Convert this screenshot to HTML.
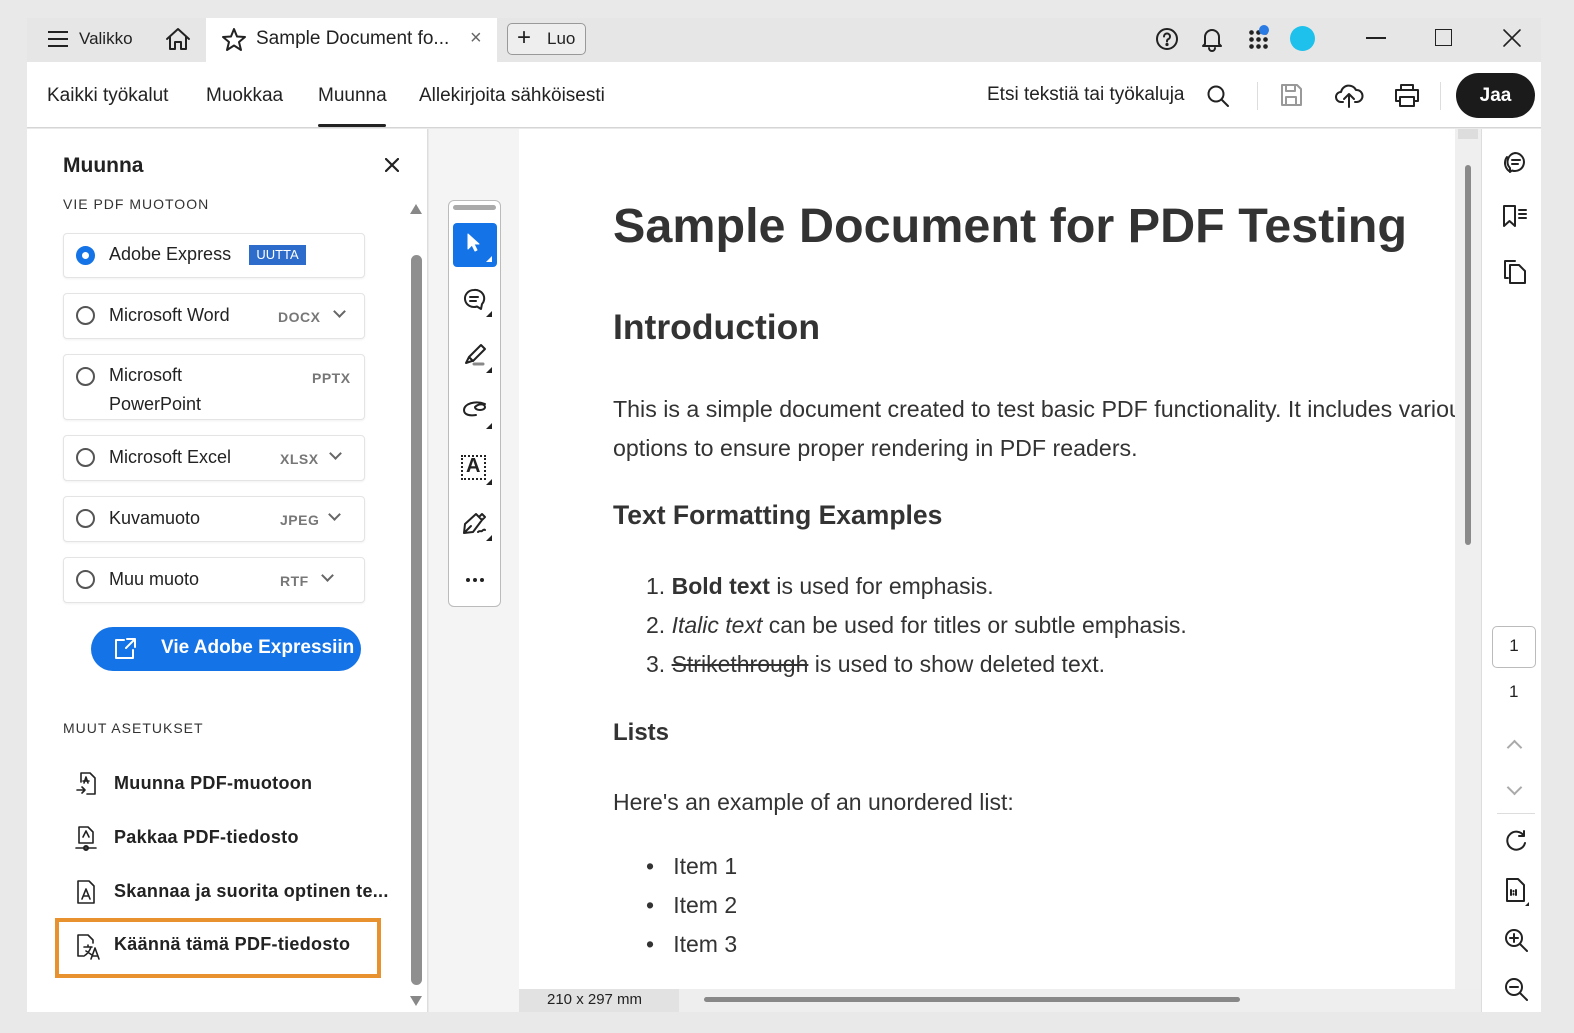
<!DOCTYPE html>
<html><head><meta charset="utf-8">
<style>
*{box-sizing:border-box;margin:0;padding:0}
body{width:1574px;height:1033px;background:#e9e9e9;font-family:"Liberation Sans",Arial,sans-serif;position:relative;overflow:hidden;color:#222}
.a{position:absolute}
.ui{font-family:"Liberation Sans",Arial,sans-serif}
svg{position:absolute;fill:none;stroke:#222;stroke-width:2;stroke-linecap:round;stroke-linejoin:round}
.card{position:absolute;left:63px;width:302px;background:#fff;border:1px solid #e4e4e4;border-radius:4px;box-shadow:0 1px 2px rgba(0,0,0,.06)}
.radio{position:absolute;left:12px;width:19px;height:19px;border:2.5px solid #555;border-radius:50%}
.ct{position:absolute;left:45px;font-size:18px;color:#222}
.fmt{position:absolute;font-size:14px;color:#777;font-weight:bold;letter-spacing:.5px}
.chev{position:absolute;width:9px;height:9px;border-right:2px solid #666;border-bottom:2px solid #666;transform:rotate(45deg)}
.doc{color:#333}
.li{position:absolute;font-size:23px;color:#333}
.mi{position:absolute;left:114px;font-size:18px;font-weight:bold;color:#222;letter-spacing:.3px}
.tri{position:absolute;width:0;height:0;border-left:6px solid transparent;border-bottom:6px solid #222}
</style></head><body>
<!-- title bar -->
<div class="a" style="left:27px;top:18px;width:1514px;height:44px;background:#e6e6e6"></div>
<div class="a" style="left:48px;top:31px;width:20px;height:2px;background:#222;box-shadow:0 7px 0 #222,0 14px 0 #222"></div>
<div class="a" style="left:79px;top:29px;font-size:17px">Valikko</div>
<svg style="left:164px;top:26px" width="28" height="26" viewBox="0 0 28 26"><path d="M3 13 L14 3 L25 13 M6 11 V23 H11 V16 H17 V23 H22 V11"/></svg>
<div class="a" style="left:206px;top:18px;width:291px;height:44px;background:#fff"></div>
<svg style="left:221px;top:27px" width="26" height="25" viewBox="0 0 26 25"><path d="M13 2 L16 9.5 L24 10 L18 15 L20 23 L13 18.5 L6 23 L8 15 L2 10 L10 9.5 Z"/></svg>
<div class="a" style="left:256px;top:28px;font-size:19px">Sample Document fo...</div>
<div class="a" style="left:470px;top:27px;font-size:20px;color:#666">×</div>
<div class="a" style="left:507px;top:23px;width:79px;height:32px;border:1.5px solid #999;border-radius:5px;background:#eee"></div>
<div class="a" style="left:517px;top:24px;font-size:24px">+</div>
<div class="a" style="left:547px;top:29px;font-size:17px">Luo</div>
<svg style="left:1155px;top:27px" width="24" height="24" viewBox="0 0 24 24"><circle cx="12" cy="12" r="10"/><path d="M9 9.5a3 3 0 1 1 4 2.8c-1 .5-1 1-1 2.2"/><circle cx="12" cy="17.5" r=".6" fill="#222"/></svg>
<svg style="left:1200px;top:26px" width="24" height="26" viewBox="0 0 24 26"><path d="M5 18 V11 a7 7 0 0 1 14 0 V18 L21 20 H3 Z M9 22 a3 3 0 0 0 6 0"/></svg>
<div class="a" style="left:1248px;top:29px;width:20px;height:20px;background:radial-gradient(circle,#222 2px,transparent 2.6px) 0 0/7px 7px"></div>
<div class="a" style="left:1259px;top:25px;width:10px;height:10px;border-radius:50%;background:#2b7be4"></div>
<div class="a" style="left:1290px;top:26px;width:25px;height:25px;border-radius:50%;background:#1ec1ec"></div>
<div class="a" style="left:1366px;top:37px;width:20px;height:2px;background:#222"></div>
<div class="a" style="left:1435px;top:29px;width:17px;height:17px;border:1.5px solid #222"></div>
<svg style="left:1502px;top:28px" width="20" height="20" viewBox="0 0 20 20"><path d="M2 2 L18 18 M18 2 L2 18" stroke-width="1.6"/></svg>

<!-- toolbar -->
<div class="a" style="left:27px;top:62px;width:1514px;height:66px;background:#fff;border-bottom:1px solid #d5d5d5"></div>
<div class="a" style="left:47px;top:85px;font-size:19px">Kaikki työkalut</div>
<div class="a" style="left:206px;top:85px;font-size:19px">Muokkaa</div>
<div class="a" style="left:318px;top:85px;font-size:19px">Muunna</div>
<div class="a" style="left:318px;top:124px;width:68px;height:3px;background:#222;border-radius:2px"></div>
<div class="a" style="left:419px;top:85px;font-size:19px">Allekirjoita sähköisesti</div>
<div class="a" style="left:987px;top:84px;font-size:19px">Etsi tekstiä tai työkaluja</div>
<svg style="left:1206px;top:84px" width="24" height="24" viewBox="0 0 24 24"><circle cx="10" cy="10" r="7.5"/><path d="M15.5 15.5 L22 22"/></svg>
<div class="a" style="left:1257px;top:82px;width:1px;height:28px;background:#ddd"></div>
<svg style="left:1279px;top:82px" width="24" height="26" viewBox="0 0 24 26"><path stroke="#999" d="M3 3 H18 L22 7 V23 H3 Z M7 3 V9 H16 V3 M7 23 V15 H17 V23"/></svg>
<svg style="left:1334px;top:80px" width="30" height="30" viewBox="0 0 30 30"><path d="M9 22 H7 a5 5 0 0 1 0-10 a8 8 0 0 1 15-2 a5.5 5.5 0 0 1 1 12 H21 M15 27 V14 M10 19 L15 14 L20 19"/></svg>
<svg style="left:1393px;top:82px" width="28" height="26" viewBox="0 0 28 26"><path d="M8 8 V3 H20 V8 M3 8 H25 V19 H21 M7 19 H3 V8 M7 15 H21 V24 H7 Z"/></svg>
<div class="a" style="left:1440px;top:82px;width:1px;height:28px;background:#ddd"></div>
<div class="a" style="left:1456px;top:73px;width:79px;height:45px;border-radius:23px;background:#1b1b1b;color:#fff;font-weight:bold;font-size:19px;text-align:center;line-height:45px">Jaa</div>

<!-- left panel -->
<div class="a" style="left:27px;top:129px;width:401px;height:883px;background:#fff;border-right:1px solid #ddd"></div>
<div class="a ui" style="left:63px;top:154px;font-size:21px;font-weight:bold">Muunna</div>
<svg style="left:385px;top:158px" width="14" height="14" viewBox="0 0 14 14"><path d="M1 1 L13 13 M13 1 L1 13" stroke-width="2.2"/></svg>
<div class="a ui" style="left:63px;top:196px;font-size:14px;letter-spacing:1px;color:#333">VIE PDF MUOTOON</div>

<div class="card ui" style="top:233px;height:45px"><div class="radio" style="top:12px;border:6px solid #1473e6"></div><div class="ct" style="top:10px">Adobe Express</div><div class="a" style="left:185px;top:11px;width:57px;height:20px;background:#2d6ccb;color:#fff;font-size:13px;text-align:center;line-height:20px">UUTTA</div></div>
<div class="card ui" style="top:293px;height:46px"><div class="radio" style="top:12px"></div><div class="ct" style="top:11px">Microsoft Word</div><div class="fmt" style="left:214px;top:15px">DOCX</div><div class="chev" style="left:271px;top:13px"></div></div>
<div class="card ui" style="top:354px;height:66px"><div class="radio" style="top:12px"></div><div class="ct" style="line-height:29px;top:6px">Microsoft<br>PowerPoint</div><div class="fmt" style="left:248px;top:15px">PPTX</div></div>
<div class="card ui" style="top:435px;height:46px"><div class="radio" style="top:12px"></div><div class="ct" style="top:11px">Microsoft Excel</div><div class="fmt" style="left:216px;top:15px">XLSX</div><div class="chev" style="left:267px;top:13px"></div></div>
<div class="card ui" style="top:496px;height:46px"><div class="radio" style="top:12px"></div><div class="ct" style="top:11px">Kuvamuoto</div><div class="fmt" style="left:216px;top:15px">JPEG</div><div class="chev" style="left:266px;top:13px"></div></div>
<div class="card ui" style="top:557px;height:46px"><div class="radio" style="top:12px"></div><div class="ct" style="top:11px">Muu muoto</div><div class="fmt" style="left:216px;top:15px">RTF</div><div class="chev" style="left:259px;top:13px"></div></div>

<div class="a" style="left:91px;top:627px;width:270px;height:44px;border-radius:22px;background:#1473e6"></div>
<svg style="left:113px;top:636px" width="26" height="25" viewBox="0 0 26 25"><path stroke="#fff" d="M11 4 H3 V22 H20 V14 M14 3 H22 V11 M22 3 L13 12"/></svg>
<div class="a ui" style="left:161px;top:637px;font-size:19px;font-weight:bold;color:#fff">Vie Adobe Expressiin</div>

<div class="a ui" style="left:63px;top:720px;font-size:14px;letter-spacing:1px;color:#333">MUUT ASETUKSET</div>
<svg style="left:73px;top:770px" width="26" height="28" viewBox="0 0 26 28"><path stroke-width="1.6" d="M8 12 V3 H17 L22 8 V24 H14 M4 20 H12 M9 17 L12 20 L9 23 M11 13 L13 7 L15 13 M10 11 H16"/></svg>
<div class="mi ui" style="top:773px">Muunna PDF-muotoon</div>
<svg style="left:73px;top:824px" width="26" height="28" viewBox="0 0 26 28"><path stroke-width="1.6" d="M6 19 V3 H15 L20 8 V19 Z M3 24 H23 M10 13 L13 7 L16 13"/><circle cx="13" cy="24" r="2"/></svg>
<div class="mi ui" style="top:827px">Pakkaa PDF-tiedosto</div>
<svg style="left:73px;top:878px" width="26" height="28" viewBox="0 0 26 28"><path stroke-width="1.6" d="M5 3 H16 L21 8 V25 H5 Z M9 21 L13 11 L17 21 M10.5 18 H15.5"/></svg>
<div class="mi ui" style="top:881px">Skannaa ja suorita optinen te...</div>
<div class="a" style="left:55px;top:918px;width:326px;height:60px;border:4px solid #e8912f"></div>
<svg style="left:73px;top:931px" width="30" height="30" viewBox="0 0 30 30"><path stroke-width="1.6" d="M10 25 H5 V4 H15 L20 9 V12 M11 16 H19 M15 14 V16 M18 16 Q16 22 11 25 M13 20 L19 24 M18 28 L22 17 L26 28 M19.5 25 H24.5"/></svg>
<div class="mi ui" style="top:934px">Käännä tämä PDF-tiedosto</div>
<!-- panel scrollbar -->
<div class="tri" style="left:410px;top:204px;border-left:6px solid transparent;border-right:6px solid transparent;border-bottom:10px solid #888"></div>
<div class="a" style="left:411px;top:255px;width:11px;height:730px;border-radius:6px;background:#8f8f8f"></div>
<div class="a" style="left:410px;top:996px;width:0;height:0;border-left:6px solid transparent;border-right:6px solid transparent;border-top:10px solid #888"></div>

<!-- middle gray -->
<div class="a" style="left:429px;top:129px;width:90px;height:883px;background:#f4f4f4"></div>
<div class="a" style="left:448px;top:200px;width:53px;height:407px;background:#fff;border:1.5px solid #bbb;border-radius:6px"></div>
<div class="a" style="left:453px;top:205px;width:43px;height:5px;background:#aaa;border-radius:3px"></div>
<div class="a" style="left:453px;top:223px;width:44px;height:44px;background:#1473e6;border-radius:4px"></div>
<svg style="left:465px;top:232px" width="18" height="22" viewBox="0 0 18 22"><path fill="#fff" stroke="#fff" stroke-width="1" d="M3 2 V17 L7 13 L10 19 L12 18 L9 12 L14 12 Z"/></svg>
<div class="tri" style="left:486px;top:256px;border-bottom-color:#fff"></div>
<svg style="left:461px;top:287px" width="28" height="26" viewBox="0 0 28 26"><path d="M13 3 a9 8.5 0 1 0 3 16.5 L20 22 L21 17 A9 8.5 0 0 0 13 3 Z M9 10 H17 M9 14 H15"/></svg><div class="tri" style="left:486px;top:311px"></div>
<svg style="left:461px;top:342px" width="28" height="26" viewBox="0 0 28 26"><path d="M20 3 L24 7 L12 19 L8 15 Z M8 15 L5 21 L11 19"/><path stroke="#888" stroke-width="3" d="M13 22 H22"/></svg><div class="tri" style="left:486px;top:367px"></div>
<svg style="left:461px;top:398px" width="28" height="26" viewBox="0 0 28 26"><path d="M14 9 c4 -4 10 -3 10 0 c0 4 -10 4 -10 0 M24 6 C14 2 3 6 3 12 c0 5 6 6 12 5"/></svg><div class="tri" style="left:486px;top:423px"></div>
<div class="a" style="left:461px;top:455px;width:25px;height:25px;border:2px dotted #222"></div>
<div class="a" style="left:466px;top:455px;font-size:20px;font-weight:bold;">A</div><div class="tri" style="left:486px;top:479px"></div>
<svg style="left:460px;top:510px" width="30" height="28" viewBox="0 0 30 28"><path d="M16 4 L22 10 L13 22 L4 23 L5 14 Z M19 7 L22 4 L25 7 L22 10 M4 23 L11 16 M18 22 c2-2 3 0 4-1 s2-2 3-1"/></svg><div class="tri" style="left:486px;top:535px"></div>
<div class="a" style="left:466px;top:578px;width:4px;height:4px;border-radius:50%;background:#222;box-shadow:7px 0 #222,14px 0 #222"></div>

<!-- document -->
<div class="a" style="left:519px;top:129px;width:936px;height:860px;background:#fff"></div>
<div class="a doc" style="left:613px;top:198px;font-size:48.5px;font-weight:bold;white-space:nowrap">Sample Document for PDF Testing</div>
<div class="a doc" style="left:613px;top:307px;font-size:35.5px;font-weight:bold">Introduction</div>
<div class="a doc" style="left:613px;top:390px;width:842px;overflow:hidden;font-size:23.2px;line-height:39px;white-space:nowrap">This is a simple document created to test basic PDF functionality. It includes various<br>options to ensure proper rendering in PDF readers.</div>
<div class="a doc" style="left:613px;top:500px;font-size:26.5px;font-weight:bold">Text Formatting Examples</div>
<div class="li" style="left:646px;top:573px">1. <b>Bold text</b> is used for emphasis.</div>
<div class="li" style="left:646px;top:612px">2. <i>Italic text</i> can be used for titles or subtle emphasis.</div>
<div class="li" style="left:646px;top:651px">3. <s>Strikethrough</s> is used to show deleted text.</div>
<div class="a doc" style="left:613px;top:719px;font-size:24px;font-weight:bold">Lists</div>
<div class="li" style="left:613px;top:789px">Here's an example of an unordered list:</div>
<div class="li" style="left:646px;top:853px">•&nbsp;&nbsp; Item 1</div>
<div class="li" style="left:646px;top:892px">•&nbsp;&nbsp; Item 2</div>
<div class="li" style="left:646px;top:931px">•&nbsp;&nbsp; Item 3</div>
<!-- bottom status -->
<div class="a" style="left:519px;top:989px;width:962px;height:23px;background:#eee"></div>
<div class="a" style="left:519px;top:989px;width:160px;height:23px;background:#e2e2e2;font-size:15px;line-height:22px;padding-left:28px;color:#222">210 x 297 mm</div>
<div class="a" style="left:704px;top:997px;width:536px;height:5px;border-radius:3px;background:#888"></div>
<!-- doc scrollbar -->
<div class="a" style="left:1455px;top:129px;width:26px;height:860px;background:#efefef"></div>
<div class="a" style="left:1458px;top:129px;width:20px;height:10px;background:#ddd"></div>
<div class="a" style="left:1465px;top:165px;width:6px;height:380px;border-radius:3px;background:#8a8a8a"></div>

<!-- right rail -->
<div class="a" style="left:1481px;top:129px;width:60px;height:883px;background:#fff;border-left:1px solid #ddd"></div>
<svg style="left:1501px;top:150px" width="28" height="26" viewBox="0 0 28 26"><path d="M14 3 a9 9 0 1 1 -3 17.5 L9 22 L9 18 A9 9 0 0 1 14 3 Z M11 10 H19 M11 14 H17 M6 7 a10 10 0 0 0 2 14"/></svg>
<svg style="left:1501px;top:202px" width="28" height="28" viewBox="0 0 28 28"><path d="M3 4 H14 V24 L8.5 19 L3 24 Z M18 8 H25 M18 12 H25 M18 16 H25" stroke-width="2"/></svg>
<svg style="left:1501px;top:257px" width="28" height="28" viewBox="0 0 28 28"><path d="M7 21 H4 V4 H14 M9 8 H18 L24 14 V26 H9 Z"/></svg>
<div class="a" style="left:1492px;top:626px;width:44px;height:42px;border:1.5px solid #bbb;border-radius:5px;text-align:center;line-height:38px;font-size:17px">1</div>
<div class="a" style="left:1509px;top:682px;font-size:17px">1</div>
<div class="a" style="left:1509px;top:742px;width:11px;height:11px;border-left:2px solid #aaa;border-top:2px solid #aaa;transform:rotate(45deg)"></div>
<div class="a" style="left:1509px;top:782px;width:11px;height:11px;border-right:2px solid #aaa;border-bottom:2px solid #aaa;transform:rotate(45deg)"></div>
<div class="a" style="left:1497px;top:813px;width:38px;height:1px;background:#ddd"></div>
<svg style="left:1503px;top:828px" width="26" height="26" viewBox="0 0 26 26"><path d="M21 8 A9 9 0 1 0 22 15 M21 3 V8 H16"/></svg>
<svg style="left:1503px;top:876px" width="28" height="30" viewBox="0 0 28 30"><path d="M4 3 H15 L21 9 V25 H4 Z M8 19 V14 M10.5 15 V15.5 M10.5 18 V18.5 M13 19 V14"/><path fill="#222" stroke="none" d="M26 26 L26 31 L21 31 Z"/></svg>
<svg style="left:1503px;top:927px" width="26" height="26" viewBox="0 0 26 26"><circle cx="11" cy="11" r="8"/><path d="M17 17 L24 24 M11 7 V15 M7 11 H15"/></svg>
<svg style="left:1503px;top:976px" width="26" height="26" viewBox="0 0 26 26"><circle cx="11" cy="11" r="8"/><path d="M17 17 L24 24 M7 11 H15"/></svg>
</body></html>
